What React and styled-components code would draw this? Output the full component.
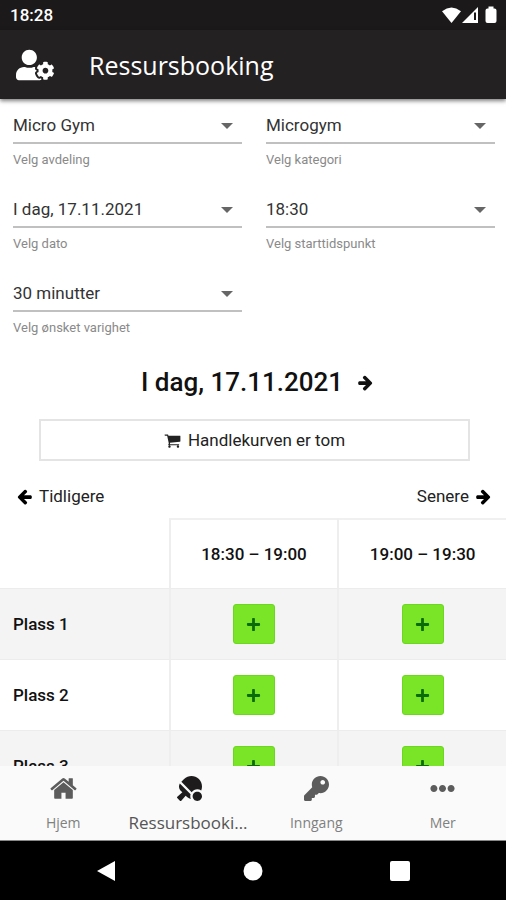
import React from "react";
import styled, { createGlobalStyle } from "styled-components";
import {
  FaEllipsisH,
  FaKey,
  FaPlus,
  FaTableTennis,
  FaUserCog,
} from "react-icons/fa";

const fields = [
  { id: "avdeling", hint: "Velg avdeling", value: "Micro Gym" },
  { id: "kategori", hint: "Velg kategori", value: "Microgym" },
  { id: "dato", hint: "Velg dato", value: "I dag, 17.11.2021" },
  { id: "start", hint: "Velg starttidspunkt", value: "18:30" },
  { id: "varighet", hint: "Velg ønsket varighet", value: "30 minutter" },
];

const times = ["18:30 – 19:00", "19:00 – 19:30"];
const places = ["Plass 1", "Plass 2", "Plass 3"];

const HomeIcon = () => (
  <svg width="29" height="29" viewBox="0 0 1792 1792" fill="currentColor">
    <path d="M1472 992v480q0 26-19 45t-45 19h-384v-384h-256v384h-384q-26 0-45-19t-19-45v-480q0-1 .5-3t.5-3l575-474 575 474q1 2 1 6zm223-69l-62 74q-8 9-21 11h-3q-13 0-21-7l-692-577-692 577q-12 8-24 7-13-2-21-11l-62-74q-8-10-7-23.500t11-21.500l719-599q32-26 76-26t76 26l244 204v-195q0-14 9-23t23-9h192q14 0 23 9t9 23v408l219 182q10 8 11 21.500t-7 23.500z" />
  </svg>
);

const CartIcon = () => (
  <svg width="17" height="17" viewBox="0 0 1792 1792" fill="currentColor">
    <path d="M704 1536q0 52-38 90t-90 38-90-38-38-90 38-90 90-38 90 38 38 90zm896 0q0 52-38 90t-90 38-90-38-38-90 38-90 90-38 90 38 38 90zm128-1088v512q0 24-16.500 42.500t-40.500 21.500l-1044 122q13 60 13 70 0 16-24 64h920q26 0 45 19t19 45-19 45-45 19h-1024q-26 0-45-19t-19-45q0-11 8-31.500t16-36 21.500-40 15.500-29.500l-177-823h-204q-26 0-45-19t-19-45 19-45 45-19h256q16 0 28.500 6.500t19.500 15.500 13 24.500 8 26 5.500 29.500 4.500 26h1201q26 0 45 19t19 45z" />
  </svg>
);

const ArrowIcon = ({ right }) => (
  <svg width="17" height="17" viewBox="0 0 1792 1792" fill="currentColor">
    <path
      transform={right ? "matrix(-1 0 0 1 1792 0)" : undefined}
      d="M1664 896v128q0 53-32.500 90.500t-84.500 37.500h-704l293 294q38 36 38 90t-38 90l-75 76q-37 37-90 37-52 0-91-37l-651-652q-37-37-37-90 0-52 37-91l651-650q38-38 91-38 52 0 90 38l75 74q38 38 38 91t-38 91l-293 293h704q52 0 84.500 37.500t32.500 90.500z"
    />
  </svg>
);

const tabs = [
  { label: "Hjem", icon: <HomeIcon /> },
  { label: "Ressursbooking", icon: <FaTableTennis size={25} />, active: true },
  { label: "Inngang", icon: <FaKey size={25} /> },
  { label: "Mer", icon: <FaEllipsisH size={25} /> },
];

const StatusIcons = () => (
  <svg width="56" height="20" viewBox="0 0 56 20" fill="#fff">
    <path d="M0 6.200Q9.500 -1.200 19 6.200L9.500 18Z" />
    <path d="M36 2V18H20Z" />
    <path d="M33 7.500V15" stroke="#1b191a" strokeWidth="2" />
    <path d="M46.500 1.500h5v2h1q2 0 2 2v10.500q0 2 -2 2h-7q-2 0 -2 -2v-10.500q0 -2 2 -2h1z" />
  </svg>
);

const SelectField = ({ id, hint, value }) => (
  <Field>
    <SelectBox>
      <select id={id} defaultValue={value}>
        <option>{value}</option>
      </select>
      <Caret />
    </SelectBox>
    <label htmlFor={id}>{hint}</label>
  </Field>
);

const App = () => {
  return (
    <Screen>
      <GlobalStyle />
      <StatusBar>
        <span>18:28</span>
        <StatusIcons />
      </StatusBar>
      <Header>
        <IconButton aria-label="Profil">
          <FaUserCog size={38} />
        </IconButton>
        <h1>Ressursbooking</h1>
      </Header>

      <Content>
        <Filters>
          {fields.map((field) => (
            <SelectField key={field.id} {...field} />
          ))}
        </Filters>

        <DayTitle>
          <h2>I dag, 17.11.2021</h2>
          <IconButton aria-label="Neste dag">
            <ArrowIcon right />
          </IconButton>
        </DayTitle>

        <CartButton>
          <CartIcon />
          Handlekurven er tom
        </CartButton>

        <Pager>
          <PagerButton>
            <ArrowIcon />
            Tidligere
          </PagerButton>
          <PagerButton>
            Senere
            <ArrowIcon right />
          </PagerButton>
        </Pager>

        <Schedule>
          <thead>
            <tr>
              <td />
              {times.map((time) => (
                <th key={time} scope="col">
                  {time}
                </th>
              ))}
            </tr>
          </thead>
          <tbody>
            {places.map((place) => (
              <tr key={place}>
                <th scope="row">{place}</th>
                {times.map((time) => (
                  <td key={time}>
                    <AddButton aria-label={`${place}, ${time}`}>
                      <FaPlus size={15} />
                    </AddButton>
                  </td>
                ))}
              </tr>
            ))}
          </tbody>
        </Schedule>
      </Content>

      <TabBar>
        {tabs.map((tab) => (
          <Tab key={tab.label} href="#" $active={tab.active}>
            <TabIcon>{tab.icon}</TabIcon>
            <TabLabel $active={tab.active}>{tab.label}</TabLabel>
          </Tab>
        ))}
      </TabBar>

      <SystemNav>
        <button aria-label="Tilbake">
          <svg width="20" height="22" viewBox="0 0 20 22">
            <path d="M19 1V21L1 11Z" />
          </svg>
        </button>
        <button aria-label="Startskjerm">
          <svg width="20" height="20" viewBox="0 0 20 20">
            <circle cx="10" cy="10" r="9.500" />
          </svg>
        </button>
        <button aria-label="Oversikt">
          <svg width="20" height="20" viewBox="0 0 20 20">
            <rect width="20" height="20" rx="2" />
          </svg>
        </button>
      </SystemNav>
    </Screen>
  );
};

const GlobalStyle = createGlobalStyle`
  * {
    box-sizing: border-box;
  }
  body {
    margin: 0;
    font-family: Roboto, "Liberation Sans", sans-serif;
    font-size: 16px;
    color: #111;
    background: #fff;
  }
  button, select {
    font: inherit;
    color: inherit;
    background: none;
    border: 0;
    padding: 0;
  }
  svg {
    display: block;
    flex-shrink: 0;
  }
  h1, h2 {
    margin: 0;
  }
`;

const Screen = styled.div`
  display: flex;
  flex-direction: column;
  height: 100vh;
`;

const StatusBar = styled.div`
  display: flex;
  align-items: center;
  justify-content: space-between;
  height: 30px;
  flex-shrink: 0;
  padding: 0 8px 0 10px;
  background: #1b191a;
  color: #fff;
  font-size: 17px;
  font-weight: 500;
`;

const Header = styled.header`
  display: flex;
  align-items: center;
  gap: 35px;
  height: 69px;
  flex-shrink: 0;
  padding: 0 16px;
  background: #242122;
  color: #fff;
  box-shadow: 0 2px 4px rgba(0, 0, 0, 0.5);
  z-index: 1;
  h1 {
    font-family: "Open Sans", sans-serif;
    font-size: 25px;
    font-weight: 400;
  }
`;

const IconButton = styled.button`
  display: flex;
`;

const Content = styled.main`
  flex: 1;
  min-height: 0;
  overflow-y: auto;
  scrollbar-width: none;
`;

const Filters = styled.div`
  display: grid;
  grid-template-columns: 1fr 1fr;
  gap: 12px 24px;
  padding: 9px 11px 0 13px;
`;

const Field = styled.div`
  height: 72px;
  label {
    display: block;
    padding-top: 8px;
    font-size: 13px;
    line-height: 16px;
    color: #8a8a8a;
  }
`;

const SelectBox = styled.div`
  display: flex;
  align-items: center;
  height: 36px;
  border-bottom: 2px solid #c0c0c0;
  select {
    flex: 1;
    min-width: 0;
    height: 100%;
    appearance: none;
    font-size: 17px;
    color: #333;
    outline: 0;
  }
`;

const Caret = styled.span`
  margin: 2px 9px 0 0;
  border: 6px solid transparent;
  border-top-color: #666;
  border-bottom: 0;
  pointer-events: none;
`;

const DayTitle = styled.div`
  display: flex;
  align-items: center;
  justify-content: center;
  gap: 14px;
  padding: 16px 0 19px 9px;
  h2 {
    font-size: 26px;
    font-weight: 500;
    line-height: 36px;
  }
`;

const CartButton = styled.button`
  display: flex;
  align-items: center;
  justify-content: center;
  gap: 7px;
  width: calc(100% - 75px);
  height: 42px;
  margin: 0 36px 0 39px;
  border: 2px solid #e4e4e4;
  color: #222;
  font-size: 17px;
`;

const Pager = styled.div`
  display: flex;
  justify-content: space-between;
  padding: 23px 14px 10px 16px;
`;

const PagerButton = styled.button`
  display: flex;
  align-items: center;
  gap: 6px;
  color: #222;
  font-size: 17px;
  line-height: 24px;
  svg {
    color: #000;
  }
`;

const Schedule = styled.table`
  width: 100%;
  table-layout: fixed;
  border-collapse: separate;
  border-spacing: 0;
  th,
  td {
    height: 71px;
    padding: 0;
    border-bottom: 1px solid #ececec;
    font-size: 17px;
    font-weight: 500;
  }
  thead th {
    border-top: 2px solid #f0f0f0;
  }
  tr > * + * {
    border-left: 2px solid #eee;
  }
  tbody th {
    padding-left: 13px;
    text-align: left;
  }
  tbody tr:nth-child(odd) {
    background: #f4f4f4;
  }
`;

const AddButton = styled.button`
  display: flex;
  align-items: center;
  justify-content: center;
  width: 42px;
  height: 40px;
  margin: 0 auto;
  border: 1px solid #6bd81f;
  border-radius: 3px;
  background: #79e526;
  color: #0b6b0b;
`;

const TabBar = styled.nav`
  display: grid;
  grid-template-columns: repeat(4, minmax(0, 1fr));
  height: 75px;
  flex-shrink: 0;
  border-bottom: 1px solid #888;
  background: #fafafa;
`;

const Tab = styled.a`
  display: flex;
  flex-direction: column;
  align-items: center;
  justify-content: space-between;
  padding: 8px 2px 6px;
  color: ${(props) => (props.$active ? "#1d1b1c" : "#5c5c5c")};
  text-decoration: none;
`;

const TabIcon = styled.span`
  display: flex;
  align-items: center;
  height: 29px;
`;

const TabLabel = styled.span`
  max-width: 100%;
  overflow: hidden;
  text-overflow: ellipsis;
  white-space: nowrap;
  font-family: "Open Sans", sans-serif;
  font-size: ${(props) => (props.$active ? "17px" : "14px")};
  line-height: 22px;
  color: ${(props) => (props.$active ? "#555" : "#808080")};
`;

const SystemNav = styled.div`
  display: flex;
  align-items: center;
  justify-content: space-between;
  height: 59px;
  flex-shrink: 0;
  padding: 0 19%;
  background: #000;
  svg {
    fill: #fff;
  }
`;

export default App;
